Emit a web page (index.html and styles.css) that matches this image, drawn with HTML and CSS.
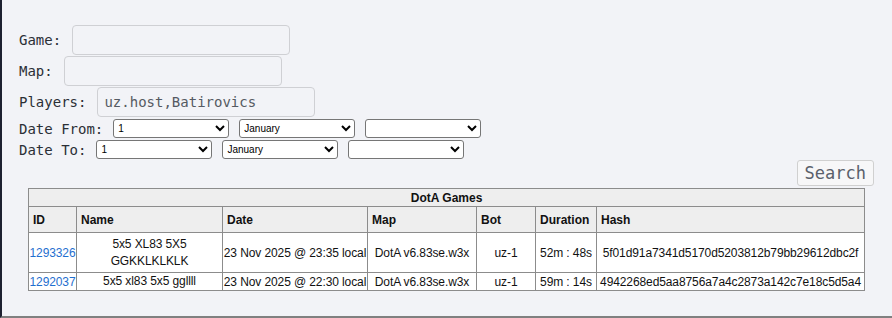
FILE: index.html
```html
<!DOCTYPE html>
<html lang="en">
<head>
    <meta charset="UTF-8">
    <meta name="viewport" content="width=device-width, initial-scale=1.0">
    <title>DotA Games</title>
    <link rel="stylesheet" href="styles.css">
</head>
<body>
    <div class="page">
        <form id="search-form">
            <div class="row">
                <label for="game">Game:</label>
                <input type="text" id="game" name="game" />
            </div>
            <div class="row">
                <label for="map">Map:</label>
                <input type="text" id="map" name="map" />
            </div>
            <div class="row">
                <label for="players">Players:</label>
                <input type="text" id="players" name="players" value="uz.host,Batirovics" />
            </div>
            <div class="row date-row">
                <label>Date From:</label>
                <select name="from_day"><option>1</option><option>2</option></select>
                <select name="from_month"><option>January</option><option>February</option></select>
                <select name="from_year"><option></option><option>2025</option></select>
            </div>
            <div class="row date-row">
                <label>Date To:</label>
                <select name="to_day"><option>1</option><option>2</option></select>
                <select name="to_month"><option>January</option><option>February</option></select>
                <select name="to_year"><option></option><option>2025</option></select>
            </div>
            <div class="actions">
                <button type="submit">Search</button>
            </div>
        </form>

        <table class="games">
            <colgroup>
                <col style="width: 48px">
                <col style="width: 146px">
                <col style="width: 145px">
                <col style="width: 109px">
                <col style="width: 59px">
                <col style="width: 61px">
                <col style="width: 268px">
            </colgroup>
            <thead>
                <tr class="caption-row"><th colspan="7">DotA Games</th></tr>
                <tr class="head-row">
                    <th>ID</th>
                    <th>Name</th>
                    <th>Date</th>
                    <th>Map</th>
                    <th>Bot</th>
                    <th>Duration</th>
                    <th>Hash</th>
                </tr>
            </thead>
            <tbody>
                <tr class="tall">
                    <td><a href="#">1293326</a></td>
                    <td class="name">5x5 XL83 5X5 GGKKLKLKLK</td>
                    <td>23 Nov 2025 @ 23:35 local</td>
                    <td>DotA v6.83se.w3x</td>
                    <td>uz-1</td>
                    <td>52m : 48s</td>
                    <td>5f01d91a7341d5170d5203812b79bb29612dbc2f</td>
                </tr>
                <tr>
                    <td><a href="#">1292037</a></td>
                    <td class="name">5x5 xl83 5x5 ggllll</td>
                    <td>23 Nov 2025 @ 22:30 local</td>
                    <td>DotA v6.83se.w3x</td>
                    <td>uz-1</td>
                    <td>59m : 14s</td>
                    <td>4942268ed5aa8756a7a4c2873a142c7e18c5d5a4</td>
                </tr>
            </tbody>
        </table>
    </div>
</body>
</html>
```

FILE: styles.css
```css
body {
    margin: 0;
    background-color: #f2f3f7;
    font-family: "DejaVu Sans Mono", monospace;
    font-size: 14px;
    color: #2b2f36;
}
.page {
    height: 318px;
    box-sizing: border-box;
    border-left: 2px solid #1d2030;
    border-bottom: 2px solid #808080;
    padding: 25px 18px 0 17px;
    overflow: hidden;
}
.row {
    display: flex;
    align-items: center;
    gap: 10px;
    height: 30px;
    margin-bottom: 1px;
}
.date-row {
    height: 21px;
    margin-bottom: 0;
}
input[type="text"] {
    width: 218px;
    height: 30px;
    box-sizing: border-box;
    margin: 0 0 0 1px;
    padding: 0 6px;
    border: 1px solid #cfd0d4;
    border-radius: 4px;
    background-color: #f2f3f7;
    font-family: "DejaVu Sans Mono", monospace;
    font-size: 14px;
    color: #555a62;
}
select {
    width: 116px;
    height: 19px;
    margin: 0;
    border: 1px solid #767676;
    border-radius: 3px;
    background-color: #fff;
    font-family: "Liberation Sans", Arial, sans-serif;
    font-size: 10px;
    color: #000;
}
.actions {
    text-align: right;
}
button {
    height: 26px;
    padding: 0 7px;
    border: 1px solid #d0d0d0;
    border-radius: 3px;
    background-color: #f7f7f8;
    font-family: "DejaVu Sans Mono", monospace;
    font-size: 17px;
    color: #5a606b;
    cursor: pointer;
}
.games {
    margin: 2px 0 0 9px;
    width: 836px;
    table-layout: fixed;
    border-collapse: collapse;
    font-family: "Liberation Sans", Arial, sans-serif;
    font-size: 12px;
    color: #111;
    background-color: #fff;
}
.games th,
.games td {
    border: 1px solid #8c8c8c;
}
.games th {
    background-color: #eeeeee;
    text-align: left;
    padding: 0 4px;
    font-weight: bold;
}
.caption-row th {
    height: 17px;
    text-align: center;
}
.head-row th {
    height: 25px;
}
.games td {
    padding: 0;
    text-align: center;
    white-space: nowrap;
    letter-spacing: -0.1px;
    height: 15px;
}
.games td.name {
    white-space: normal;
    line-height: 17px;
}
.games tr.tall td {
    height: 39px;
}
.games a {
    color: #1f6fcf;
    text-decoration: none;
}
```
